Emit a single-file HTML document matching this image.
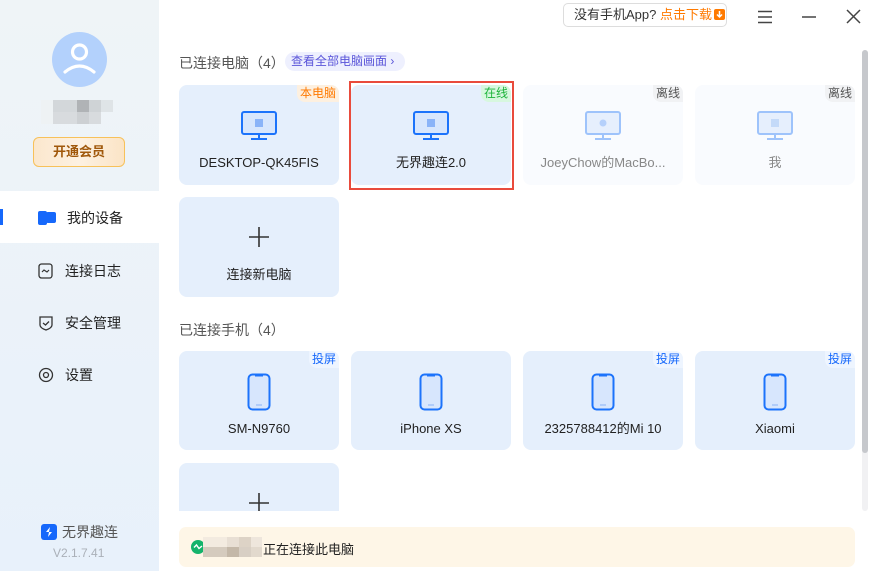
<!DOCTYPE html>
<html><head><meta charset="utf-8"><style>
*{margin:0;padding:0;box-sizing:border-box}
body{width:876px;height:571px;overflow:hidden;font-family:"Liberation Sans","Noto Sans CJK SC",sans-serif;background:#fff;position:relative;color:#222}
.side{position:absolute;left:0;top:0;width:159px;height:571px;background:linear-gradient(#eff4f7,#e8f1fb)}
.abs{position:absolute}
.card{position:absolute;width:160px;height:100px;border-radius:8px;background:#e5effc}
.card.off{background:#f9fbfe}
.tag{position:absolute;right:0;top:0;font-size:12px;padding:0 3px;border-radius:0 8px 0 8px;line-height:17px}
.name{position:absolute;left:0;right:0;top:70px;text-align:center;font-size:13px;line-height:16px;height:16px;white-space:nowrap;color:#222}
.mon{position:absolute;left:62px;top:26px}
.ph{position:absolute;left:68px;top:22px}
.nav{position:absolute;left:38px;font-size:14px;color:#222;display:flex;align-items:center}
.nav svg{margin-right:11px}
</style></head><body>
<div class="side">
  <div class="abs" style="left:52px;top:32px;width:55px;height:55px;border-radius:50%;background:#b3d1fc">
    <svg width="55" height="55" viewBox="0 0 55 55"><circle cx="27.5" cy="20" r="7" fill="none" stroke="#fff" stroke-width="3.2"/><path d="M13 40 Q27.5 28 42 40" fill="none" stroke="#fff" stroke-width="3.2" stroke-linecap="round"/></svg>
  </div>
  <div class="abs" style="left:41px;top:100px;width:72px;height:12px;background:linear-gradient(90deg,#eef2f4 0 12px,#d3d7da 12px 36px,#b0b3b6 36px 48px,#cfd3d6 48px 60px,#dfe4e7 60px)"></div>
  <div class="abs" style="left:41px;top:112px;width:60px;height:12px;background:linear-gradient(90deg,#eef2f4 0 12px,#d8dbde 12px 36px,#cdd0d3 36px 48px,#d8dbde 48px)"></div>
  <div class="abs" style="left:33px;top:137px;width:92px;height:30px;border:1.5px solid #f7c15a;border-radius:6px;background:linear-gradient(90deg,#fbe7cd,#fdf1e2,#fbe4c6);color:#a0580b;font-weight:bold;font-size:13px;text-align:center;line-height:27px">开通会员</div>
  <div class="abs" style="left:0;top:191px;width:159px;height:52px;background:#fff"></div>
  <div class="abs" style="left:0;top:209px;width:3px;height:16px;background:#1668fb"></div>
  <div class="nav" style="top:208px"><svg width="18" height="16"><rect x="0" y="1" width="9" height="14" rx="2" fill="#1668fb"/><rect x="8" y="2" width="10" height="11" rx="2" fill="#1668fb"/></svg>我的设备</div>
  <div class="nav" style="top:261px"><svg width="16" height="16"><rect x="1" y="1" width="13" height="14" rx="2.5" fill="none" stroke="#333" stroke-width="1.3"/><path d="M4 9 L6 7 L9 9 L11 7" fill="none" stroke="#333" stroke-width="1.2"/></svg>连接日志</div>
  <div class="nav" style="top:313px"><svg width="16" height="16"><path d="M2 2 L14 2 L14 10 Q14 13 8 15 Q2 13 2 10Z" fill="none" stroke="#333" stroke-width="1.3"/><path d="M5 8 L7.5 10 L11 6.5" fill="none" stroke="#333" stroke-width="1.3"/></svg>安全管理</div>
  <div class="nav" style="top:365px"><svg width="16" height="16"><circle cx="8" cy="8" r="6.5" fill="none" stroke="#333" stroke-width="1.3"/><circle cx="8" cy="8" r="2.5" fill="none" stroke="#333" stroke-width="1.3"/></svg>设置</div>
  <div class="abs" style="left:41px;top:522px;display:flex;align-items:center;font-size:14px;color:#555"><svg width="16" height="16" style="margin-right:5px"><rect width="16" height="16" rx="3" fill="#1668fb"/><path d="M9 3 L5 8 L8 8 L7 13 L11 8 L8 8Z" fill="#fff"/></svg>无界趣连</div>
  <div class="abs" style="left:53px;top:546px;font-size:12px;color:#aab0b8">V2.1.7.41</div>
</div>

<div class="abs" style="left:563px;top:3px;width:164px;height:24px;border:1px solid #ddd;border-radius:5px;font-size:13px;line-height:22px;padding-left:10px;color:#333;white-space:nowrap">没有手机App? <span style="color:#ff7a00">点击下载</span><span style="display:inline-block;width:11px;height:11px;background:#ff7a00;border-radius:2px;vertical-align:-1px;margin-left:2px;position:relative"><svg width="11" height="11" style="position:absolute;left:0;top:0"><path d="M5.5 2 V8 M3 5.5 L5.5 8 L8 5.5" stroke="#fff" stroke-width="1.5" fill="none"/></svg></span></div>
<svg class="abs" style="left:757px;top:10px" width="16" height="14"><path d="M1 1.5H15M1 7H15M1 12.5H15" stroke="#444" stroke-width="1.5"/></svg>
<svg class="abs" style="left:801px;top:10px" width="16" height="14"><path d="M1 7H15" stroke="#444" stroke-width="1.5"/></svg>
<svg class="abs" style="left:846px;top:9px" width="15" height="15"><path d="M1 1L14 14M14 1L1 14" stroke="#444" stroke-width="1.5"/></svg>

<div class="abs" style="left:179px;top:53px;font-size:14px;color:#555">已连接电脑（4）</div>
<div class="abs" style="left:285px;top:52px;width:120px;height:19px;border-radius:10px;background:#eef0fe;color:#5a55d9;font-size:12px;line-height:19px;padding-left:6px">查看全部电脑画面 ›</div>

<div class="card" style="left:179px;top:85px"><div class="tag" style="background:#fdf0e0;color:#ff7a00">本电脑</div>
<svg class="mon" width="36" height="30"><rect x="1" y="1" width="34" height="22" rx="2" fill="#d7e6fd" stroke="#1c73fb" stroke-width="2"/><rect x="14" y="8" width="8" height="8" fill="#8ab3f8"/><path d="M18 23 V27 M10 28 H26" stroke="#1c73fb" stroke-width="2"/></svg>
<div class="name">DESKTOP-QK45FIS</div></div>

<div class="abs" style="left:349px;top:81px;width:165px;height:109px;border:2px solid #e94b3c"></div>
<div class="card" style="left:351px;top:85px"><div class="tag" style="background:#d7f7df;color:#1db43a">在线</div>
<svg class="mon" width="36" height="30"><rect x="1" y="1" width="34" height="22" rx="2" fill="#d7e6fd" stroke="#1c73fb" stroke-width="2"/><rect x="14" y="8" width="8" height="8" fill="#8ab3f8"/><path d="M18 23 V27 M10 28 H26" stroke="#1c73fb" stroke-width="2"/></svg>
<div class="name">无界趣连2.0</div></div>

<div class="card off" style="left:523px;top:85px"><div class="tag" style="background:#f1f2f4;color:#555">离线</div>
<svg class="mon" width="36" height="30"><rect x="1" y="1" width="34" height="22" rx="2" fill="#e6effd" stroke="#9ec3fb" stroke-width="2"/><circle cx="18" cy="12" r="3.5" fill="#b5d0fb"/><path d="M18 23 V27 M10 28 H26" stroke="#9ec3fb" stroke-width="2"/></svg>
<div class="name" style="color:#888">JoeyChow的MacBo...</div></div>

<div class="card off" style="left:695px;top:85px"><div class="tag" style="background:#f1f2f4;color:#555">离线</div>
<svg class="mon" width="36" height="30"><rect x="1" y="1" width="34" height="22" rx="2" fill="#e6effd" stroke="#9ec3fb" stroke-width="2"/><rect x="14" y="8" width="8" height="8" fill="#c4daf9"/><path d="M18 23 V27 M10 28 H26" stroke="#9ec3fb" stroke-width="2"/></svg>
<div class="name" style="color:#888">我</div></div>

<div class="card" style="left:179px;top:197px"><svg class="abs" style="left:70px;top:30px" width="20" height="20"><path d="M10 0V20M0 10H20" stroke="#333" stroke-width="1.6"/></svg><div class="name">连接新电脑</div></div>

<div class="abs" style="left:179px;top:320px;font-size:14px;color:#555">已连接手机（4）</div>

<div class="card" style="left:179px;top:351px;height:99px"><div class="tag" style="background:#eef5ff;color:#1668fb">投屏</div>
<svg class="ph" width="24" height="38"><rect x="1.5" y="1.5" width="21" height="35" rx="4" fill="#d7e6fd" stroke="#1c73fb" stroke-width="2"/><path d="M8 2.5H16" stroke="#1c73fb" stroke-width="2"/><path d="M9 32H15" stroke="#8ab3f8" stroke-width="1"/></svg>
<div class="name">SM-N9760</div></div>
<div class="card" style="left:351px;top:351px;height:99px">
<svg class="ph" width="24" height="38"><rect x="1.5" y="1.5" width="21" height="35" rx="4" fill="#d7e6fd" stroke="#1c73fb" stroke-width="2"/><path d="M8 2.5H16" stroke="#1c73fb" stroke-width="2"/><path d="M9 32H15" stroke="#8ab3f8" stroke-width="1"/></svg>
<div class="name">iPhone XS</div></div>
<div class="card" style="left:523px;top:351px;height:99px"><div class="tag" style="background:#eef5ff;color:#1668fb">投屏</div>
<svg class="ph" width="24" height="38"><rect x="1.5" y="1.5" width="21" height="35" rx="4" fill="#d7e6fd" stroke="#1c73fb" stroke-width="2"/><path d="M8 2.5H16" stroke="#1c73fb" stroke-width="2"/><path d="M9 32H15" stroke="#8ab3f8" stroke-width="1"/></svg>
<div class="name">2325788412的Mi 10</div></div>
<div class="card" style="left:695px;top:351px;height:99px"><div class="tag" style="background:#eef5ff;color:#1668fb">投屏</div>
<svg class="ph" width="24" height="38"><rect x="1.5" y="1.5" width="21" height="35" rx="4" fill="#d7e6fd" stroke="#1c73fb" stroke-width="2"/><path d="M8 2.5H16" stroke="#1c73fb" stroke-width="2"/><path d="M9 32H15" stroke="#8ab3f8" stroke-width="1"/></svg>
<div class="name">Xiaomi</div></div>

<div class="abs" style="left:179px;top:463px;width:160px;height:48px;overflow:hidden"><div class="card" style="left:0;top:0"><svg class="abs" style="left:70px;top:30px" width="20" height="20"><path d="M10 0V20M0 10H20" stroke="#333" stroke-width="1.6"/></svg></div></div>

<div class="abs" style="left:862px;top:50px;width:6px;height:461px;border-radius:3px;background:#f1f1f3"></div>
<div class="abs" style="left:862px;top:50px;width:6px;height:403px;border-radius:3px;background:#c6c8cc"></div>

<div class="abs" style="left:179px;top:527px;width:676px;height:40px;border-radius:7px;background:#fef6e7"></div>
<svg class="abs" style="left:191px;top:540px" width="14" height="14"><circle cx="7" cy="7" r="7" fill="#14b36b"/><path d="M3 7.5 L5.5 5 L8 8.5 L11 6" stroke="#fff" stroke-width="1.4" fill="none"/></svg>
<div class="abs" style="left:203px;top:537px;width:59px;height:10px;background:linear-gradient(90deg,#f3ebe0 0 24px,#e8dfd4 24px 36px,#ddd3c6 36px 48px,#eee6dc 48px)"></div>
<div class="abs" style="left:203px;top:547px;width:59px;height:10px;background:linear-gradient(90deg,#d5cbbe 0 24px,#c4b8a8 24px 36px,#d8cfc4 36px 48px,#e2d9cd 48px)"></div>
<div class="abs" style="left:263px;top:539px;font-size:13px;color:#222">正在连接此电脑</div>
</body></html>
